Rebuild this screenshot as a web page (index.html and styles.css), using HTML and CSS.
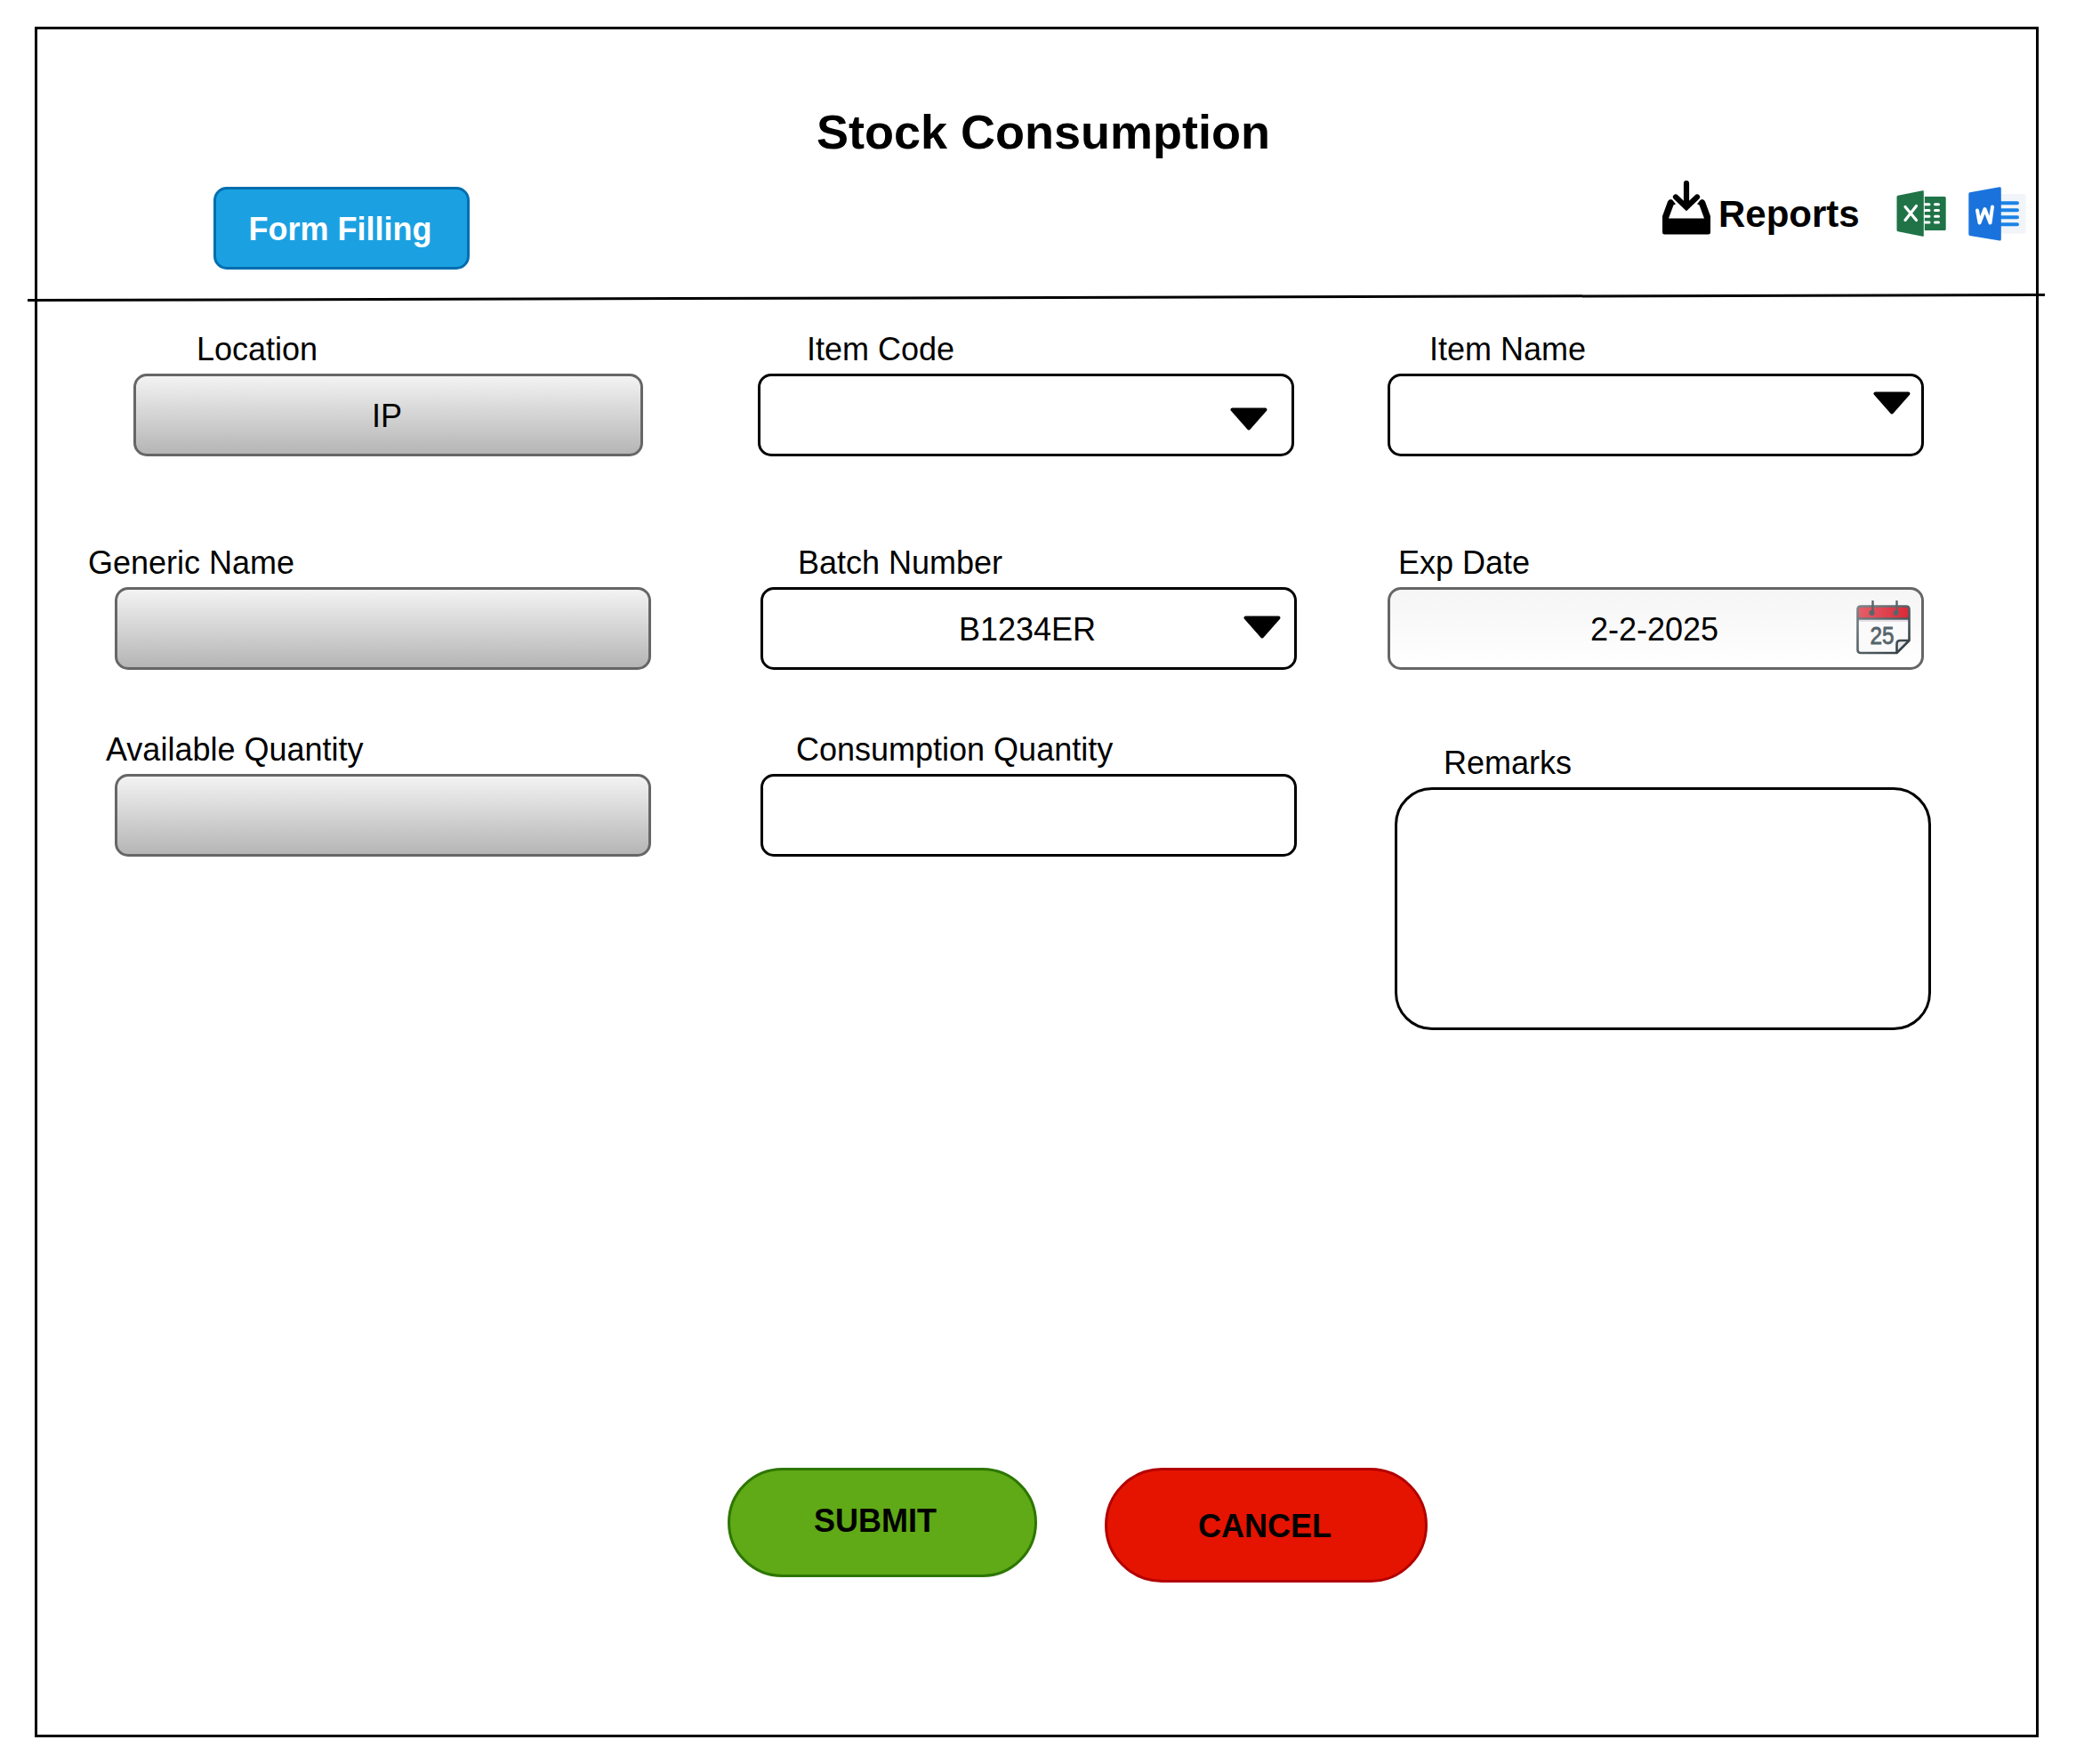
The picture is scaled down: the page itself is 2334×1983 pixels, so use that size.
FILE: index.html
```html
<!DOCTYPE html>
<html lang="en">
<head>
<meta charset="utf-8">
<title>Stock Consumption</title>
<link rel="stylesheet" href="styles.css">
</head>
<body>
<main class="frame">
  <header class="header">
    <h1 class="title">Stock Consumption</h1>
    <div class="toolbar">
      <div class="btn-form">Form Filling</div>
      <div class="reports">
        <svg class="icon-download" width="54" height="61" viewBox="0 0 54 61">
          <path d="M0 40 6 23.500Q7 21 9.500 21L11.500 22 15 26.500 12.500 27.500 7 42.500H47L41.500 27.500 39 26.500 42.500 22 44.500 21Q47 21 48 23.500L54 40V58Q54 60.500 51.500 60.500H2.500Q0 60.500 0 58Z"/>
          <path d="M27 3V29M15 18.500 27 30 39 18.500" fill="none" stroke="#000" stroke-width="6.200" stroke-linecap="round"/>
        </svg>
        <span class="reports-label">Reports</span>
      </div>
      <svg class="icon-excel" width="56" height="52" viewBox="0 0 56 52">
        <rect x="30" y="7" width="25.700" height="38" rx="1.500" fill="#207347"/>
        <path d="M31 15.800H37M31 22.500H37M31 29.200H37M31 36H37M43.500 15.800H47.500M43.500 22.500H47.500M43.500 29.200H47.500M43.500 36H47.500" stroke="#fff" stroke-width="3" stroke-linecap="round"/>
        <path d="M0.500 7.500Q0.500 6 2 5.700L29.500 0.300Q31 0 31 1.500V50.500Q31 52 29.500 51.700L2 46.300Q0.500 46 0.500 44.500Z" fill="#207347"/>
        <path d="M31.300 1V51" stroke="#fff" stroke-width="1"/>
        <path d="M10 18.500 22.500 33.500M22.500 17.500 10 33.500" stroke="#fff" stroke-width="3.200" stroke-linecap="round"/>
      </svg>
      <svg class="icon-word" width="65" height="61" viewBox="0 0 65 61">
        <rect x="34" y="8" width="30.500" height="44.500" rx="2.500" fill="#f1f4f8"/>
        <path d="M34 18.200H55M34 26.200H55M34 34.200H55M34 42.300H55" stroke="#1b83e6" stroke-width="4" stroke-linecap="round"/>
        <path d="M0.300 8Q0.300 6.500 1.800 6.200L35 0.300Q36.800 0 36.800 1.800V59Q36.800 60.800 35 60.500L1.800 55Q0.300 54.800 0.300 53Z" fill="#1a73dc"/>
        <path d="M10 26.500 12.500 40.500 18.500 25 24.500 40.500 27 22.500" fill="none" stroke="#fff" stroke-width="4" stroke-linecap="round" stroke-linejoin="round"/>
      </svg>
    </div>
  </header>

  <svg class="divider" width="2268" height="12" viewBox="0 0 2268 12">
    <path d="M0 9.500 2268 3.500" stroke="#000" stroke-width="3"/>
  </svg>

  <section class="form">
    <div class="field location">
      <div class="label">Location</div>
      <div class="box readonly">IP</div>
    </div>
    <div class="field item-code">
      <div class="label">Item Code</div>
      <div class="box">
        <svg class="arrow" width="42" height="26" viewBox="0 0 42 26"><path d="M2.500 2.500H39.500L21 23.500Z" stroke="#000" stroke-width="4" stroke-linejoin="round"/></svg>
      </div>
    </div>
    <div class="field item-name">
      <div class="label">Item Name</div>
      <div class="box">
        <svg class="arrow" width="42" height="26" viewBox="0 0 42 26"><path d="M2.500 2.500H39.500L21 23.500Z" stroke="#000" stroke-width="4" stroke-linejoin="round"/></svg>
      </div>
    </div>
    <div class="field generic-name">
      <div class="label">Generic Name</div>
      <div class="box readonly"></div>
    </div>
    <div class="field batch">
      <div class="label">Batch Number</div>
      <div class="box">B1234ER
        <svg class="arrow" width="42" height="26" viewBox="0 0 42 26"><path d="M2.500 2.500H39.500L21 23.500Z" stroke="#000" stroke-width="4" stroke-linejoin="round"/></svg>
      </div>
    </div>
    <div class="field exp-date">
      <div class="label">Exp Date</div>
      <div class="box date">2-2-2025
        <svg class="calendar" width="62" height="62" viewBox="0 0 62 62">
          <defs>
            <linearGradient id="ink" x1="0" y1="0" x2="1" y2="1"><stop offset="0" stop-color="#7b868a"/><stop offset="1" stop-color="#2f3a40"/></linearGradient>
            <linearGradient id="red" x1="0" y1="0" x2="1" y2="0"><stop offset="0" stop-color="#e3606a"/><stop offset="1" stop-color="#d92a38"/></linearGradient>
          </defs>
          <path d="M1.500 9Q1.500 6.500 4 6.500H57Q59.500 6.500 59.500 9V44.500L45.500 59H5Q1.500 59 1.500 55.500Z" fill="#fafafb"/>
          <path d="M2 20V9Q2 7 4 7H57Q59 7 59 9V20Z" fill="url(#red)"/>
          <path d="M2.500 23H58.500" stroke="#e6e1e6" stroke-width="2"/>
          <path d="M45.500 58.500V49Q45.500 45 49.500 45H59Z" fill="#e9e9ea"/>
          <path d="M1.500 10Q1.500 6.500 5 6.500H56Q59.500 6.500 59.500 10V45L45.500 59H5Q1.500 59 1.500 55.500ZM1.500 20.500H59.500M45.500 58.500V49Q45.500 45 49.500 45H59" fill="none" stroke="url(#ink)" stroke-width="2.600" stroke-linejoin="round"/>
          <path d="M18.500 1V13M45.500 1V13" stroke="#59656a" stroke-width="2.400" stroke-linecap="round"/>
          <circle cx="17.500" cy="14" r="3" fill="#59656a"/><circle cx="44.500" cy="14" r="3" fill="#59656a"/>
          <text class="calendar-day" x="15.500" y="48.500" textLength="27" lengthAdjust="spacingAndGlyphs">25</text>
        </svg>
      </div>
    </div>
    <div class="field available">
      <div class="label">Available Quantity</div>
      <div class="box readonly"></div>
    </div>
    <div class="field consumption">
      <div class="label">Consumption Quantity</div>
      <div class="box"></div>
    </div>
    <div class="field remarks">
      <div class="label">Remarks</div>
      <div class="box"></div>
    </div>
  </section>

  <div class="actions">
    <div class="btn submit">SUBMIT</div>
    <div class="btn cancel">CANCEL</div>
  </div>
</main>
</body>
</html>
```
FILE: styles.css
```css
* {
  box-sizing: border-box;
}

body {
  margin: 0;
  background: #fff;
  color: #000;
  font: 36px/43px "Liberation Sans", Arial, sans-serif;
}

svg {
  display: block;
  flex: none;
}

.frame {
  width: 2253px;
  height: 1923px;
  margin: 30px 0 0 39px;
  border: 3px solid #000;
}

.header {
  height: 295px;
  padding-top: 83px;
}

.title {
  margin: 0;
  padding-left: 15px;
  font-size: 54px;
  line-height: 65px;
  text-align: center;
}

.toolbar {
  display: flex;
  align-items: flex-start;
  margin-top: 22px;
  padding-left: 198px;
}

.btn-form {
  display: flex;
  align-items: center;
  justify-content: center;
  width: 288px;
  height: 93px;
  margin-top: 7px;
  padding: 2px 3px 0 0;
  border: 3px solid #006eaf;
  border-radius: 15px;
  background: #1ba1e2;
  color: #fff;
  font-weight: bold;
}

.reports {
  display: flex;
  align-items: flex-start;
  width: 263px;
  margin-left: 1341px;
}

.reports-label {
  margin: 13px 0 0 9px;
  font-size: 42px;
  line-height: 50px;
  font-weight: bold;
}

.icon-excel {
  margin-top: 11px;
}

.icon-word {
  margin: 7px 0 0 25px;
}

.divider {
  margin-left: -11px;
}

.form {
  display: grid;
  grid-template-columns: 810px 708px 618px;
  grid-template-rows: 240px 210px auto;
  padding-top: 31px;
}

.field {
  width: 603px;
}

.label {
  height: 43px;
  margin-bottom: 6px;
  white-space: nowrap;
}

.box {
  position: relative;
  display: flex;
  align-items: center;
  justify-content: center;
  height: 93px;
  padding: 2px 3px 0 0;
  border: 3px solid #000;
  border-radius: 15px;
}

.readonly {
  border-color: #666;
  background: linear-gradient(#f5f5f5, #b3b3b3) border-box;
}

.date {
  border-color: #666;
  background: linear-gradient(#f5f5f5, #fff) border-box;
}

.location {
  width: 573px;
  margin-left: 108px;
}

.location .label {
  padding-left: 71px;
}

.item-code .label {
  padding-left: 55px;
}

.item-name .label {
  padding-left: 47px;
}

.generic-name,
.available {
  margin-left: 87px;
}

.generic-name .label {
  margin-left: -30px;
}

.available .label {
  margin-left: -10px;
}

.batch,
.consumption {
  margin-left: 3px;
}

.batch .label {
  padding-left: 42px;
}

.consumption .label {
  padding-left: 40px;
}

.exp-date .label {
  padding-left: 12px;
}

.remarks {
  margin: 15px 0 0 8px;
}

.remarks .label {
  padding-left: 55px;
}

.remarks .box {
  height: 273px;
  border-radius: 42px;
}

.arrow,
.calendar {
  position: absolute;
}

.item-code .arrow {
  top: 35px;
  right: 27px;
}

.item-name .arrow {
  top: 17px;
  right: 12px;
}

.batch .arrow {
  top: 29px;
  right: 15px;
}

.calendar {
  top: 12px;
  right: 11px;
}

.calendar-day {
  font-size: 27px;
  fill: #56636a;
  stroke: #56636a;
  stroke-width: 0.8px;
}

.actions {
  display: flex;
  align-items: flex-start;
  gap: 76px;
  margin-top: 492px;
  padding-left: 776px;
}

.btn {
  display: flex;
  align-items: center;
  justify-content: center;
  border: 3px solid;
  border-radius: 65px;
  font-weight: bold;
}

.submit {
  width: 348px;
  height: 123px;
  padding: 0 16px 4px 0;
  border-color: #2d7600;
  background: #60a917;
}

.cancel {
  width: 363px;
  height: 129px;
  padding: 2px 3px 0 0;
  border-color: #b20000;
  background: #e51400;
}
```
